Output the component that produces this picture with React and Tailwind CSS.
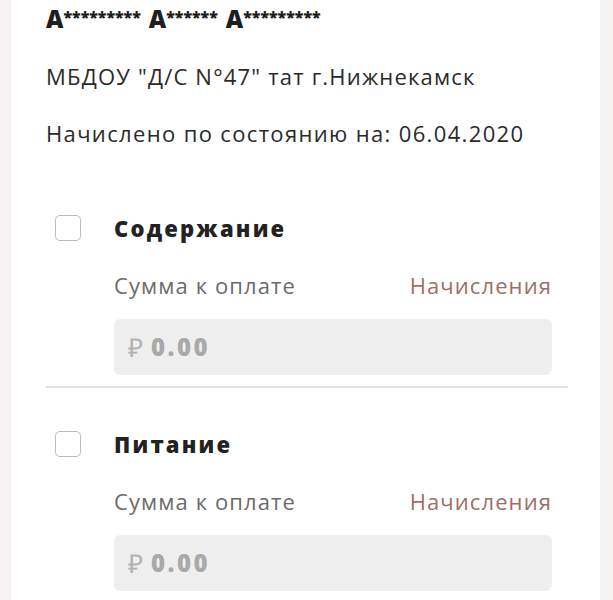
const Item = ({ title, last }) => (
  <div>
    <div className="flex h-[40px] items-center">
      <div className="ml-[9px] h-[26px] w-[26px] rounded-[5px] border-[1.5px] border-[#b9b9b9] bg-white" />
      <div className="ml-[33px] text-[22px] font-extrabold tracking-[2.2px] text-[#222]">{title}</div>
    </div>
    <div className="ml-[68px] mr-[16px]">
      <div className="mt-[17px] flex h-[40px] items-center justify-between text-[22px] tracking-[1.1px]">
        <span className="text-[#6b6b6b]">Сумма к оплате</span>
        <span className="text-[#9d6f64]">Начисления</span>
      </div>
      <div className="mt-[14px] flex h-[56px] items-center rounded-[6px] bg-[#efefef] px-[14px]">
        <span className="text-[26px] font-light text-[#b3b3b3]">₽</span>
        <span className="ml-[8px] text-[24px] font-extrabold tracking-[2.5px] text-[#a9a9a9]">0.00</span>
      </div>
    </div>
    {!last && <div className="mt-[11px] h-[2px] bg-[#e2e2e2]" />}
  </div>
);

const Masked = ({ stars }) => (
  <span className="mr-[8px]">
    <span className="text-[24px]">А</span>
    <span className="align-[5px] text-[16px]">{stars}</span>
  </span>
);

export default function App() {
  return (
    <div className="min-h-screen bg-[#f4f3f1] pl-[11px] pr-[13px] font-['Open_Sans',sans-serif]">
      <div className="min-h-[600px] bg-white pl-[35px] pr-[32px]">
        <div className="flex h-[38px] items-center font-extrabold text-[#1e1e1e]">
          <Masked stars="*********" />
          <Masked stars="******" />
          <Masked stars="*********" />
        </div>
        <div className="mt-[18px] flex h-[40px] items-center text-[22px] tracking-[1.2px] text-[#2a2a2a]">
          МБДОУ "Д/С N°47" тат г.Нижнекамск
        </div>
        <div className="mt-[17px] flex h-[40px] items-center text-[22px] tracking-[1.35px] text-[#2a2a2a]">
          Начислено по состоянию на: 06.04.2020
        </div>
        <div className="mt-[55px]">
          <Item title="Содержание" />
        </div>
        <div className="mt-[36px]">
          <Item title="Питание" last />
        </div>
      </div>
    </div>
  );
}
